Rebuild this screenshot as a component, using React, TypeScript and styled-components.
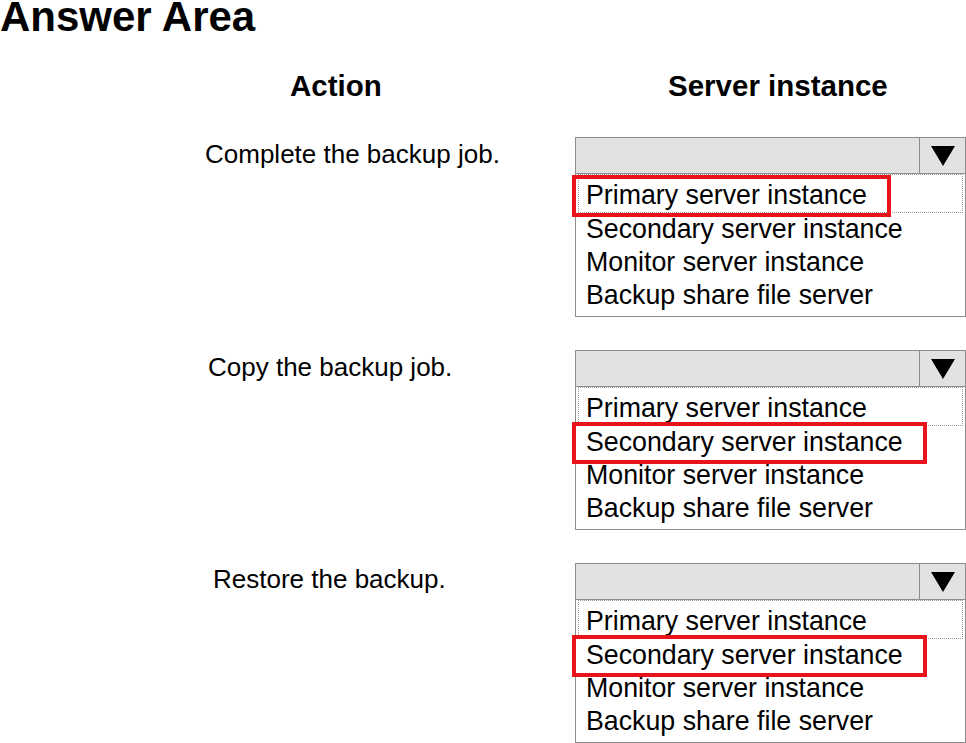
import styled, { createGlobalStyle } from "styled-components";

const GlobalStyle = createGlobalStyle`
  body {
    margin: 0;
    background: #ffffff;
    font-family: "Liberation Sans", Arial, sans-serif;
    color: #000;
    overflow: hidden;
  }
`;

const Page = styled.div`
  width: 966px;
  height: 743px;
  overflow: hidden;
`;

const Title = styled.h1`
  margin: 0;
  font-size: 42px;
  line-height: 34px;
  font-weight: bold;
`;

const Grid = styled.div`
  display: grid;
  grid-template-columns: 575px 391px;
  row-gap: 33px;
  margin-top: 35px;
`;

const ColumnHead = styled.div<{ $indent: number }>`
  padding-left: ${(p) => p.$indent}px;
  font-size: 29.5px;
  line-height: 34px;
  font-weight: bold;
  margin-bottom: 1px;
`;

const ActionLabel = styled.div<{ $indent: number; $shift: number }>`
  padding-left: ${(p) => p.$indent}px;
  padding-top: ${(p) => p.$shift}px;
  font-size: 26px;
  line-height: 33px;
`;

const Dropdown = styled.div`
  border: 1px solid #8c8c8c;
  background: #fff;
`;

const DropHeader = styled.div`
  display: flex;
  height: 35px;
  background: #e2e2e2;
  border-bottom: 1px solid #8c8c8c;
`;

const DropValue = styled.div`
  flex: 1;
`;

const ArrowCell = styled.div`
  width: 45px;
  border-left: 1px solid #8c8c8c;
  display: flex;
  align-items: center;
  justify-content: center;
`;

const OptionList = styled.div`
  padding: 0 2px 4px;
`;

const Option = styled.div<{ $focused?: boolean }>`
  font-size: 26.75px;
  line-height: 33px;
  padding-left: ${(p) => (p.$focused ? 7 : 8)}px;
  padding-top: ${(p) => (p.$focused ? 4 : 0)}px;
  border: ${(p) => (p.$focused ? "1px dotted #9a9a9a" : "none")};
  white-space: nowrap;
`;

const OptionText = styled.span<{ $marked?: boolean }>`
  position: relative;
  &::after {
    content: "";
    display: ${(p) => (p.$marked ? "block" : "none")};
    position: absolute;
    left: -14px;
    right: -24px;
    top: -5px;
    bottom: -7px;
    border: 4px solid #e8141b;
  }
`;

const options = [
  "Primary server instance",
  "Secondary server instance",
  "Monitor server instance",
  "Backup share file server",
];

const rows = [
  { action: "Complete the backup job.", indent: 205, shift: 1, answer: 0 },
  { action: "Copy the backup job.", indent: 208, shift: 1, answer: 1 },
  { action: "Restore the backup.", indent: 213, shift: 0, answer: 1 },
];

const Arrow = () => (
  <svg width="24" height="20" viewBox="0 0 24 20">
    <polygon points="0,0 24,0 12,20" fill="#000" />
  </svg>
);

const App = () => {
  return (
    <Page>
      <GlobalStyle />
      <Title>Answer Area</Title>
      <Grid>
        <ColumnHead $indent={290}>Action</ColumnHead>
        <ColumnHead $indent={93}>Server instance</ColumnHead>
        {rows.map((row) => [
          <ActionLabel key={row.action} $indent={row.indent} $shift={row.shift}>
            {row.action}
          </ActionLabel>,
          <Dropdown key={row.action + "-dd"}>
            <DropHeader>
              <DropValue />
              <ArrowCell>
                <Arrow />
              </ArrowCell>
            </DropHeader>
            <OptionList>
              {options.map((opt, i) => (
                <Option key={opt} $focused={i === 0}>
                  <OptionText $marked={i === row.answer}>{opt}</OptionText>
                </Option>
              ))}
            </OptionList>
          </Dropdown>,
        ])}
      </Grid>
    </Page>
  );
};

export default App;
